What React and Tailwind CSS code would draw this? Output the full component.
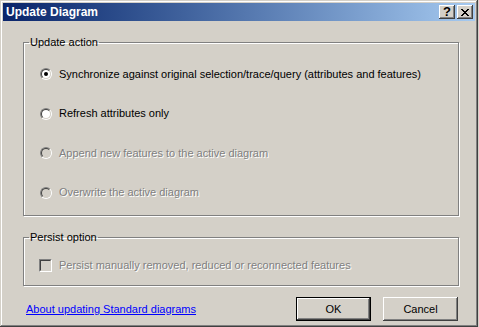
import React, { useState } from 'react';

const font = { fontFamily: '"Liberation Sans", Arial, sans-serif' };

const Radio = ({ checked, disabled, label, onClick }) => (
  <div className="flex h-[20px] items-center" onClick={disabled ? undefined : onClick}>
    <div className="h-[12px] w-[12px] rounded-full border border-t-[#808080] border-l-[#808080] border-b-white border-r-white">
      <div
        className={`flex h-full w-full items-center justify-center rounded-full border border-t-[#404040] border-l-[#404040] border-b-[#D4D0C8] border-r-[#D4D0C8] ${
          disabled ? 'bg-[#D4D0C8]' : 'bg-white'
        }`}
      >
        {checked && <div className="h-[4px] w-[4px] rounded-full bg-black" />}
      </div>
    </div>
    <span
      className={`ml-[7px] text-[11px] leading-[13px] ${
        disabled ? 'text-[#808080] [text-shadow:1px_1px_0_#fff]' : 'text-black'
      }`}
    >
      {label}
    </span>
  </div>
);

const GroupBox = ({ title, className, children }) => (
  <fieldset
    className={`ml-[20px] w-[436px] border border-[#808080] px-0 shadow-[inset_1px_1px_0_#fff,1px_1px_0_#fff] ${className}`}
  >
    <legend className="ml-[5px] px-[1px] text-[11px] leading-[13px] text-black">{title}</legend>
    {children}
  </fieldset>
);

const CaptionButton = ({ children }) => (
  <div className="flex h-[14px] w-[16px] items-center justify-center bg-[#D4D0C8] shadow-[inset_-1px_-1px_0_#404040,inset_1px_1px_0_#fff,inset_-2px_-2px_0_#808080,inset_2px_2px_0_#D4D0C8]">
    {children}
  </div>
);

const PushButton = ({ children, isDefault }) => (
  <button
    className={`h-[24px] w-[75px] bg-[#D4D0C8] text-[11px] text-black ${
      isDefault
        ? 'border border-black shadow-[inset_-1px_-1px_0_#404040,inset_1px_1px_0_#fff,inset_-2px_-2px_0_#808080]'
        : 'shadow-[inset_-1px_-1px_0_#404040,inset_1px_1px_0_#fff,inset_-2px_-2px_0_#808080,inset_2px_2px_0_#D4D0C8]'
    }`}
    style={font}
  >
    {children}
  </button>
);

export default function App() {
  const [mode, setMode] = useState('sync');

  return (
    <div className="h-[327px] w-[479px] bg-[#D4D0C8]" style={font}>
      <div className="flex h-[327px] w-[478px] flex-col bg-[#D4D0C8] p-[3px] shadow-[inset_-1px_-1px_0_#404040,inset_1px_1px_0_#D4D0C8,inset_-2px_-2px_0_#808080,inset_2px_2px_0_#fff]">
        {/* title bar */}
        <div className="flex h-[18px] shrink-0 items-center bg-gradient-to-r from-[#0A246A] to-[#A6CAF0] pl-[3px] pr-[2px]">
          <span className="text-[12px] font-bold leading-[14px] text-white">Update Diagram</span>
          <div className="ml-auto flex gap-[2px]">
            <CaptionButton>
              <span className="text-[13px] font-bold leading-[12px] text-black">?</span>
            </CaptionButton>
            <CaptionButton>
              <svg width="8" height="7" viewBox="0 0 8 7">
                <path d="M0 0h2v1h1v1h2V1h1V0h2v1H7v1H6v1H5v1h1v1h1v1h1v1H6V6H5V5H3v1H2v1H0V6h1V5h1V4h1V3H2V2H1V1H0z" fill="#000" />
              </svg>
            </CaptionButton>
          </div>
        </div>

        <GroupBox title="Update action" className="mt-[15px] h-[180px]">
          <div className="flex flex-col gap-[19.5px] pl-[16px] pt-[15px]">
            <Radio
              checked={mode === 'sync'}
              onClick={() => setMode('sync')}
              label="Synchronize against original selection/trace/query (attributes and features)"
            />
            <Radio
              checked={mode === 'refresh'}
              onClick={() => setMode('refresh')}
              label="Refresh attributes only"
            />
            <Radio disabled label="Append new features to the active diagram" />
            <Radio disabled label="Overwrite the active diagram" />
          </div>
        </GroupBox>

        <GroupBox title="Persist option" className="mt-[15px] h-[55px]">
          <div className="mt-[11px] flex h-[20px] items-center pl-[15px]">
            <div className="h-[13px] w-[13px] border border-t-[#808080] border-l-[#808080] border-b-white border-r-white">
              <div className="h-full w-full border border-t-[#404040] border-l-[#404040] border-b-[#D4D0C8] border-r-[#D4D0C8] bg-[#D4D0C8]" />
            </div>
            <span className="ml-[7px] text-[11px] leading-[13px] text-[#808080] [text-shadow:1px_1px_0_#fff]">
              Persist manually removed, reduced or reconnected features
            </span>
          </div>
        </GroupBox>

        <div className="mt-[11px] flex items-center">
          <a href="#" className="ml-[23px] text-[11px] leading-[13px] text-[#0000FF] underline">
            About updating Standard diagrams
          </a>
          <div className="ml-auto mr-[17px] flex gap-[12px]">
            <PushButton isDefault>OK</PushButton>
            <PushButton>Cancel</PushButton>
          </div>
        </div>
      </div>
    </div>
  );
}
